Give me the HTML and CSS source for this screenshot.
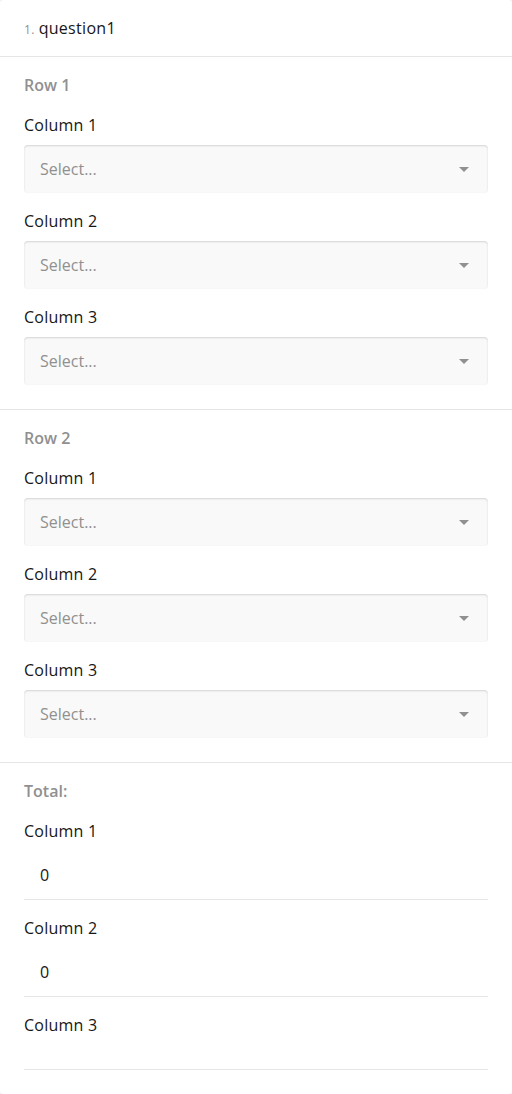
FILE: index.html
```html
<!DOCTYPE html>
<html>
<head>
<meta charset="utf-8">
<link rel="stylesheet" href="styles.css">
</head>
<body>
<div class="card">
  <div class="q-header">
    <span class="q-num">1.</span><span class="q-title">question1</span>
  </div>

  <div class="section">
    <div class="row-title">Row 1</div>
    <div class="cell">
      <div class="label">Column 1</div>
      <div class="select"><span class="placeholder">Select...</span><span class="arrow"></span></div>
    </div>
    <div class="cell">
      <div class="label">Column 2</div>
      <div class="select"><span class="placeholder">Select...</span><span class="arrow"></span></div>
    </div>
    <div class="cell">
      <div class="label">Column 3</div>
      <div class="select"><span class="placeholder">Select...</span><span class="arrow"></span></div>
    </div>
  </div>

  <div class="section">
    <div class="row-title">Row 2</div>
    <div class="cell">
      <div class="label">Column 1</div>
      <div class="select"><span class="placeholder">Select...</span><span class="arrow"></span></div>
    </div>
    <div class="cell">
      <div class="label">Column 2</div>
      <div class="select"><span class="placeholder">Select...</span><span class="arrow"></span></div>
    </div>
    <div class="cell">
      <div class="label">Column 3</div>
      <div class="select"><span class="placeholder">Select...</span><span class="arrow"></span></div>
    </div>
  </div>

  <div class="section last">
    <div class="row-title">Total:</div>
    <div class="cell">
      <div class="label">Column 1</div>
      <div class="total">0</div>
    </div>
    <div class="cell">
      <div class="label">Column 2</div>
      <div class="total">0</div>
    </div>
    <div class="cell">
      <div class="label">Column 3</div>
      <div class="total"></div>
    </div>
  </div>
</div>
</body>
</html>
```

FILE: styles.css
```css
html, body {
  margin: 0;
  padding: 0;
}
body {
  background: #f3f3f3;
  font-family: "Open Sans", "Liberation Sans", sans-serif;
  color: #161616;
  font-size: 16px;
  line-height: 24px;
}
.card {
  background: #ffffff;
  border-radius: 4px;
  width: 512px;
  height: 1094px;
  box-sizing: border-box;
}
.q-header {
  padding: 16px 24px;
  border-bottom: 1px solid #e6e6e6;
  display: flex;
  align-items: baseline;
}
.q-num {
  font-size: 12px;
  line-height: 16px;
  color: #909090;
  margin-right: 4px;
  letter-spacing: 0.3px;
}
.q-title {
  font-size: 16px;
  line-height: 24px;
  color: #161616;
  letter-spacing: 0.3px;
}
.section {
  padding: 16px 24px 24px;
  border-bottom: 1px solid #e6e6e6;
  display: flex;
  flex-direction: column;
  gap: 16px;
}
.section.last {
  border-bottom: none;
}
.row-title {
  font-weight: 600;
  color: #909090;
}
.cell {
  display: flex;
  flex-direction: column;
  gap: 8px;
}
.label {
  color: #161616;
  letter-spacing: 0.25px;
}
.select {
  height: 48px;
  box-sizing: border-box;
  background: #f9f9f9;
  border-radius: 4px;
  box-shadow: inset 0 1px 2px rgba(0, 0, 0, 0.15);
  padding: 12px 16px;
  display: flex;
  align-items: center;
  justify-content: space-between;
}
.placeholder {
  color: #909090;
}
.arrow {
  width: 0;
  height: 0;
  border-left: 5px solid transparent;
  border-right: 5px solid transparent;
  border-top: 5px solid #909090;
  margin-right: 3px;
}
.total {
  min-height: 24px;
  padding: 12px 16px;
  border-bottom: 1px solid #e6e6e6;
  color: #161616;
}
.total:empty {
  min-height: 0;
  height: 24px;
  padding: 0;
}
```
